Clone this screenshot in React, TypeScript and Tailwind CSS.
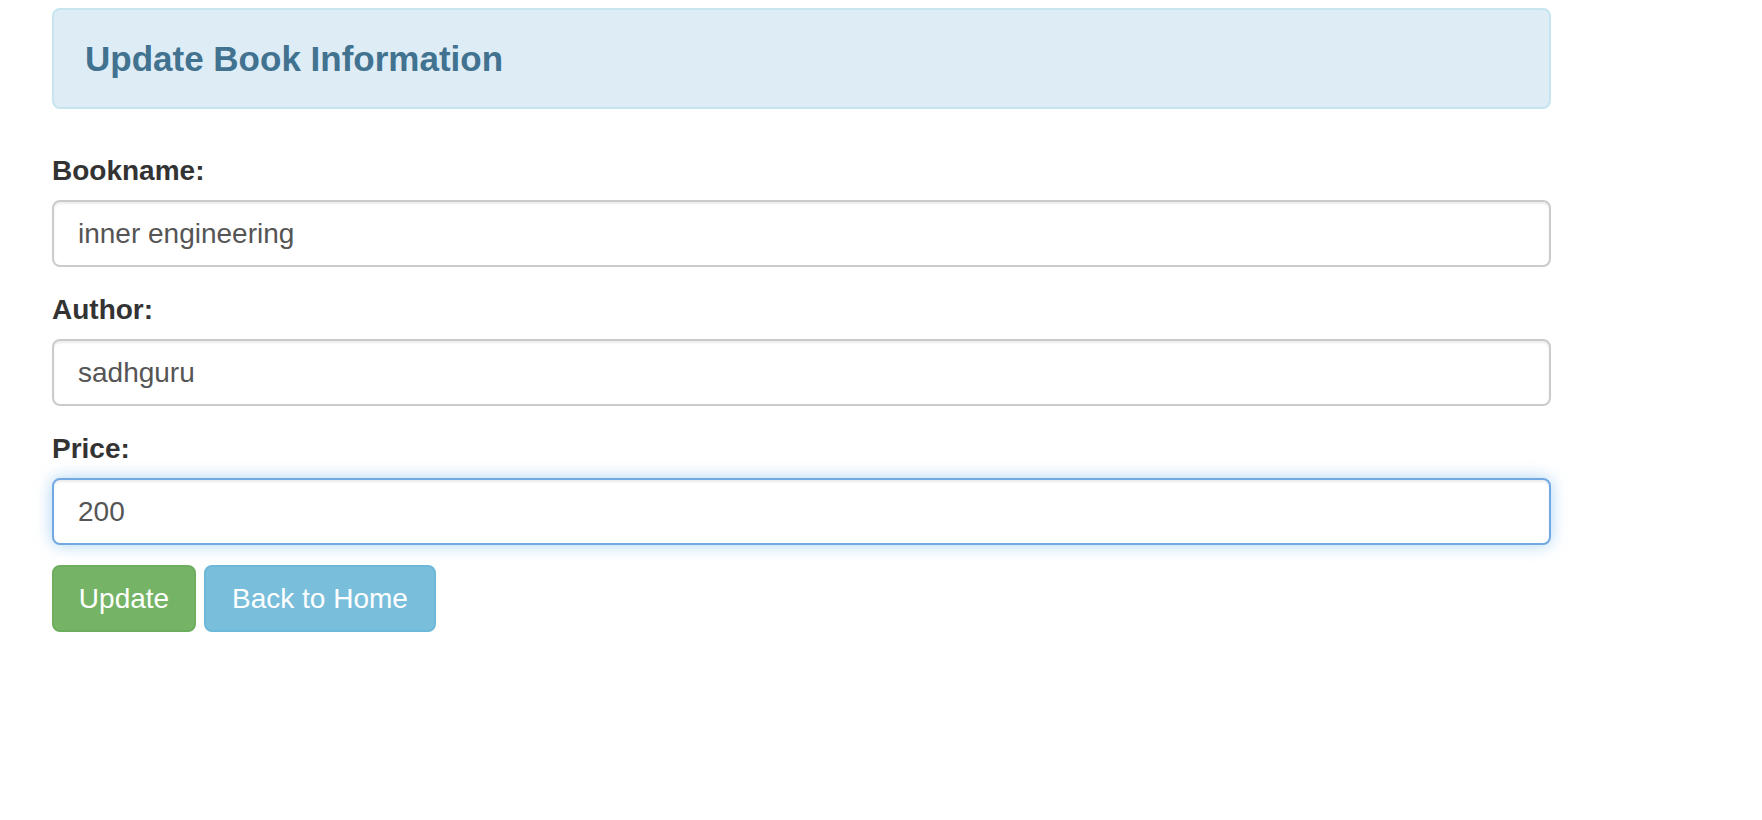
import React from "react";

function Field({ label, value, focused }: { label: string; value: string; focused?: boolean }) {
  return (
    <div className="flex flex-col">
      <label className="text-[28px] font-bold leading-[36px] mb-[11px] text-[#333333]">{label}</label>
      <input
        readOnly
        value={value}
        className={
          focused
            ? "h-[67px] w-full rounded-[8px] border-2 border-[#72a9e3] bg-white px-[24px] text-[28px] text-[#555555] outline-none shadow-[inset_0_2px_2px_rgba(0,0,0,0.075),0_0_16px_rgba(102,175,233,0.55)] [font-family:'Liberation_Sans',Arial,sans-serif]"
            : "h-[67px] w-full rounded-[8px] border-2 border-[#cbcbcb] bg-white px-[24px] text-[28px] text-[#555555] outline-none shadow-[inset_0_2px_2px_rgba(0,0,0,0.075)] [font-family:'Liberation_Sans',Arial,sans-serif]"
        }
      />
    </div>
  );
}

export default function App() {
  return (
    <div className="min-h-[820px] w-full bg-white [font-family:'Liberation_Sans',Arial,sans-serif]">
      <div className="ml-[52px] w-[1499px] pt-[8px]">
        <div className="flex h-[101px] items-center rounded-[8px] border-2 border-[#c6e5ef] bg-[#deecf6] pl-[31px]">
          <h3 className="text-[35px] font-bold leading-[35px] text-[#41728f]">Update Book Information</h3>
        </div>
        <div className="mt-[44px] flex flex-col gap-[25px]">
          <Field label="Bookname:" value="inner engineering" />
          <Field label="Author:" value="sadhguru" />
          <Field label="Price:" value="200" focused />
        </div>
        <div className="mt-[20px] flex gap-[8px]">
          <button className="h-[67px] w-[144px] rounded-[8px] border-2 border-[#6cad5e] bg-[#75b466] text-[28px] text-white">
            Update
          </button>
          <button className="h-[67px] w-[232px] rounded-[8px] border-2 border-[#6db7d8] bg-[#79bedb] text-[28px] text-white">
            Back to Home
          </button>
        </div>
      </div>
    </div>
  );
}
